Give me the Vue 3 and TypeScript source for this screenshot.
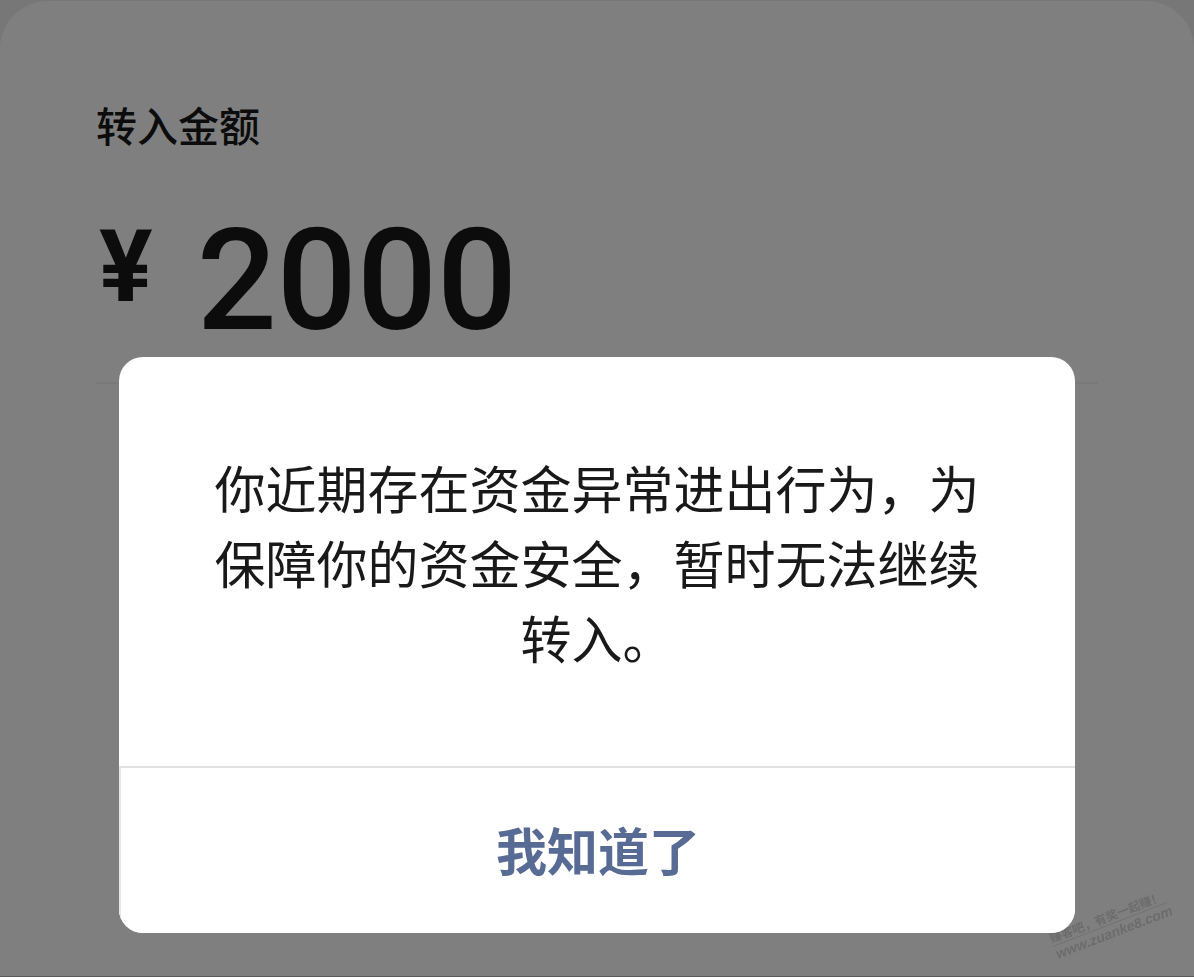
<script setup lang="ts">
import { ref } from 'vue'

const open = ref<boolean>(true)
const amount = ref<number>(2000)
const message = '你近期存在资金异常进出行为，为保障你的资金安全，暂时无法继续转入。'
</script>

<template>
  <div class="page">
    <main class="card">
      <h1 class="label">转入金额</h1>
      <div class="amount">
        <span class="currency">¥</span>
        <span class="value">{{ amount }}</span>
      </div>
    </main>
    <div v-if="open" class="mask">
      <div class="watermark" aria-hidden="true">
        <span class="slogan">赚客吧，有奖一起赚！</span>
        <span class="site">www.zuanke8.com</span>
      </div>
      <div class="dialog" role="alertdialog" aria-modal="true" aria-describedby="message">
        <p id="message" class="message">{{ message }}</p>
        <button class="confirm" type="button" @click="open = false">我知道了</button>
      </div>
    </div>
  </div>
</template>

<style>
body {
  margin: 0;
  background: #eeeeee;
}
</style>

<style scoped>
.page {
  box-sizing: border-box;
  display: flex;
  min-height: 100vh;
  padding-top: 1px;
  border-bottom: 1px solid #b4b4b4;
  background: #eeeeee;
  font-family: "Noto Sans CJK SC", sans-serif;
}

.card {
  flex: 1;
  padding: 93px 96px 0;
  border-radius: 48px 48px 0 0;
  background: #ffffff;
  color: #191919;
}

.label {
  margin: 0;
  font-size: 41px;
  font-weight: 500;
  line-height: 60px;
}

.amount {
  display: flex;
  align-items: flex-start;
  gap: 44px;
  height: 228px;
  padding-left: 3px;
  border-bottom: 2px solid #f2f2f2;
  font-family: Roboto, sans-serif;
}

.currency {
  padding-top: 58px;
  font-size: 100px;
  font-weight: 700;
  line-height: 110px;
}

.value {
  padding-top: 41px;
  font-size: 141px;
  font-weight: 500;
  line-height: 172px;
}

.mask {
  position: fixed;
  inset: 0;
  box-sizing: border-box;
  padding: 357px 10% 0;
  background: rgba(0, 0, 0, 0.5);
}

.dialog {
  position: relative;
  overflow: hidden;
  border-radius: 24px;
  background: #ffffff;
}

.message {
  margin: 0;
  padding: 93px 94px 91px;
  color: #191919;
  font-size: 51px;
  line-height: 75px;
  text-align: center;
}

.confirm {
  display: block;
  width: 100%;
  height: 167px;
  padding: 0 0 4px;
  border: 0;
  border-top: 2px solid #e2e2e2;
  border-left: 2px solid #e6e6e6;
  background: #ffffff;
  color: #576b95;
  font-family: inherit;
  font-size: 51px;
  font-weight: 700;
  line-height: 72px;
  cursor: pointer;
}

.watermark {
  position: absolute;
  right: 23px;
  bottom: 35px;
  display: flex;
  flex-direction: column;
  width: 122px;
  color: #6c6c6c;
  font-size: 12px;
  font-weight: 700;
  white-space: nowrap;
  transform: rotate(-21deg);
}

.slogan {
  border-bottom: 1px solid #707070;
  line-height: 17px;
}

.site {
  font-family: "Liberation Sans", sans-serif;
  font-size: 14px;
  font-style: italic;
  line-height: 17px;
}
</style>
